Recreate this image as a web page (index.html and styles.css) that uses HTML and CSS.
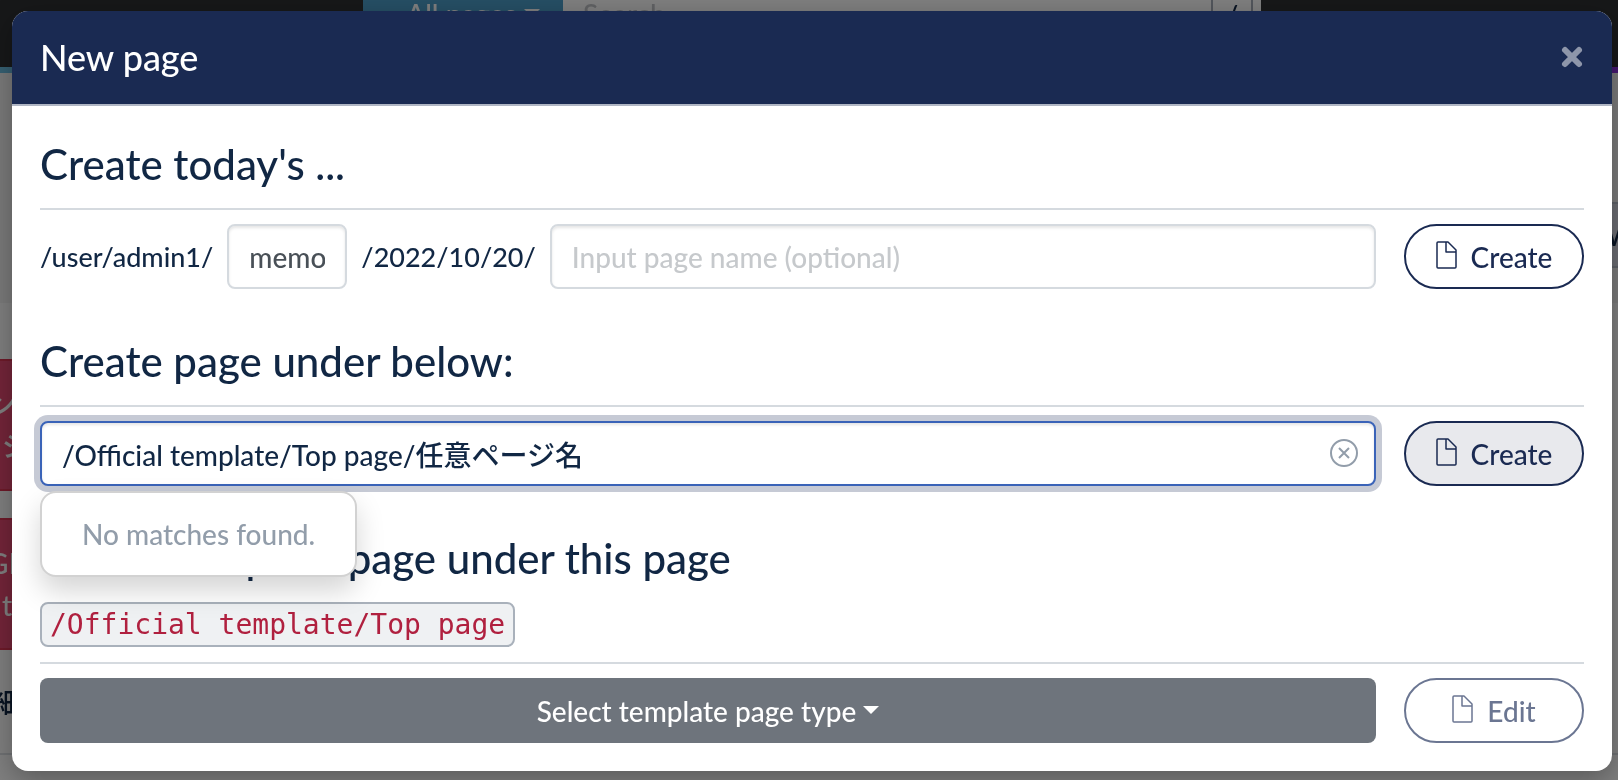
FILE: index.html
```
<!DOCTYPE html>
<html lang="ja">
<head>
    <meta charset="UTF-8">
    <meta name="viewport" content="width=device-width, initial-scale=1.0">
    <title>New page</title>
    <link rel="stylesheet" href="styles.css">
</head>
<body>
    <svg width="0" height="0" class="icon-defs" aria-hidden="true">
        <symbol id="icon-doc" viewBox="0 0 21 28">
            <path d="M12 1H2a1 1 0 0 0-1 1v24a1 1 0 0 0 1 1h17a1 1 0 0 0 1-1V9z M10 1.500V11h9.500" fill="none" stroke="currentColor" stroke-width="1.500" stroke-linejoin="round"/>
        </symbol>
    </svg>

    <div class="page" aria-hidden="true">
        <nav class="navbar">
            <div class="global-search">
                <button type="button" class="search-scope">All pages <span class="caret"></span></button>
                <input type="text" class="search-input" placeholder="Search..." aria-label="Search">
                <span class="search-key">/</span>
            </div>
        </nav>
        <div class="grw-border"></div>
        <div class="subnav">
            <button type="button" class="subnav-btn">W</button>
        </div>
        <div class="content">
            <div class="label-cell">
                <div class="cut">ン</div>
                <div>ジ</div>
            </div>
            <div class="label-cell">
                <div class="cut">GR</div>
                <div>t</div>
            </div>
            <div class="detail">細</div>
        </div>
    </div>

    <div class="backdrop"></div>

    <div class="modal" role="dialog" aria-labelledby="modalTitle">
        <div class="modal-content">
            <div class="modal-header">
                <h1 id="modalTitle">New page</h1>
                <button type="button" class="close" aria-label="Close">
                    <svg width="24" height="24" viewBox="0 0 24 24">
                        <path d="M5 5l14 14M19 5L5 19" stroke="currentColor" stroke-width="6" stroke-linecap="round"/>
                    </svg>
                </button>
            </div>
            <div class="modal-body">
                <section>
                    <h2>Create today's ...</h2>
                    <div class="form-row">
                        <div class="form-fields">
                            <label for="memo">/user/admin1/</label>
                            <input type="text" id="memo" class="form-control memo" value="memo">
                            <label for="pageName">/2022/10/20/</label>
                            <input type="text" id="pageName" class="form-control" placeholder="Input page name (optional)">
                        </div>
                        <button type="button" class="btn-pill"><svg class="icon"><use href="#icon-doc"/></svg>Create</button>
                    </div>
                </section>

                <section>
                    <h2 id="underLabel">Create page under below:</h2>
                    <div class="form-row">
                        <div class="typeahead">
                            <input type="text" class="form-control focused" value="/Official template/Top page/任意ページ名" aria-labelledby="underLabel">
                            <button type="button" class="clear" aria-label="Clear">
                                <svg width="28" height="28" viewBox="0 0 28 28" fill="none" stroke="currentColor" stroke-width="2">
                                    <circle cx="14" cy="14" r="13"/>
                                    <path d="M9 9l10 10M19 9L9 19"/>
                                </svg>
                            </button>
                            <div class="dropdown-menu">No matches found.</div>
                        </div>
                        <button type="button" class="btn-pill active"><svg class="icon"><use href="#icon-doc"/></svg>Create</button>
                    </div>
                </section>

                <section>
                    <h2>Create template page under this page<br><code>/Official template/Top page</code></h2>
                    <div class="form-row">
                        <button type="button" class="btn-secondary">Select template page type <span class="caret"></span></button>
                        <button type="button" class="btn-pill disabled"><svg class="icon"><use href="#icon-doc"/></svg>Edit</button>
                    </div>
                </section>
            </div>
        </div>
    </div>
</body>
</html>
```
FILE: styles.css
```
:root {
    --navy: #1a2a52;
    --text: #112744;
    --border: #d5dadf;
    --muted: #929daa;
}

* {
    box-sizing: border-box;
}

body {
    margin: 0;
    min-height: 100vh;
    overflow: hidden;
    background: #fff;
    color: var(--text);
    font: 500 28px/42px Lato, "Noto Sans CJK JP", sans-serif;
}

button,
input {
    font: inherit;
    color: inherit;
}

button {
    cursor: pointer;
}

label {
    font-size: 27px;
}

.icon-defs {
    position: absolute;
}

/* page behind the modal */
.page {
    position: fixed;
    inset: 0;
    overflow: hidden;
}

.navbar {
    display: flex;
    justify-content: center;
    height: 67px;
    background: #2e3033;
}

.global-search {
    display: flex;
    align-items: flex-start;
    width: 898px;
    height: 44px;
    margin-left: 6px;
    background: #fff;
}

.search-scope {
    width: 200px;
    height: 28px;
    padding: 0 0 0 20px;
    border: 0;
    background: #4c9fca;
    color: #fff;
    line-height: 28px;
}

.search-input {
    flex: 1;
    min-width: 0;
    height: 28px;
    padding: 0 20px;
    border: 0;
    background: transparent;
}

.search-input::placeholder {
    color: #c2c5c9;
}

.search-key {
    width: 42px;
    margin-right: 8px;
    border: 2px solid #a5adb8;
    border-top: 0;
    text-align: center;
    line-height: 30px;
}

.grw-border {
    height: 6px;
    background: linear-gradient(90deg, #6dc0e4, #8a30e0);
}

.subnav {
    display: flex;
    justify-content: flex-end;
    align-items: flex-start;
    height: 230px;
    padding-top: 129px;
    background: #f5f5f5;
}

.subnav-btn {
    width: 40px;
    height: 66px;
    padding: 0 0 0 28px;
    border: solid #bcc2d0;
    border-width: 2px 0;
    background: #d6d9e4;
    overflow: hidden;
}

.content {
    padding-top: 56px;
}

.label-cell {
    width: 200px;
    height: 132px;
    margin-bottom: 27px;
    padding: 22px 0 0 2px;
    border: solid #dc3553;
    border-width: 2px 0;
    background: #e64a72;
    color: #fff;
}

.cut {
    text-indent: -14px;
}

.detail {
    height: 78px;
    border-bottom: 2px solid #dfe2e6;
    line-height: 50px;
    text-indent: -8px;
}

.backdrop {
    position: fixed;
    inset: 0;
    background: rgba(0, 0, 0, 0.5);
}

/* modal */
.modal {
    position: relative;
    padding: 11px 6px 9px 12px;
}

.modal-content {
    border-radius: 16px;
    background: #fff;
    box-shadow: 0 8px 28px rgba(0, 0, 0, 0.3);
}

.modal-header {
    display: flex;
    justify-content: space-between;
    align-items: center;
    padding: 24px 28px 25px;
    border-bottom: 2px solid #b0b6c4;
    border-radius: 16px 16px 0 0;
    background: var(--navy);
    background-clip: padding-box;
    color: #fff;
}

h1 {
    margin: 0;
    font-size: 36px;
    font-weight: 500;
    line-height: 44px;
}

.close {
    display: flex;
    padding: 0;
    border: 0;
    background: none;
    color: #8e96aa;
}

.modal-body {
    padding: 28px;
}

section + section {
    margin-top: 42px;
}

h2 {
    margin: 0 0 14px;
    padding-bottom: 14px;
    border-bottom: 2px solid var(--border);
    font-size: 42px;
    font-weight: 500;
    line-height: 60px;
}

code {
    display: inline-block;
    margin-top: 14px;
    padding: 0 8px;
    border: 2px solid #a9b1bb;
    border-radius: 8px;
    background: #eff1f3;
    color: #b0203f;
    font: 28px/41px "DejaVu Sans Mono", monospace;
    vertical-align: top;
}

.form-row {
    display: flex;
    gap: 28px;
}

.form-fields {
    display: flex;
    flex: 1;
    align-items: center;
    gap: 14px;
}

.form-control {
    flex: 1;
    min-width: 0;
    width: 100%;
    height: 65px;
    padding: 0 20px;
    border: 2px solid var(--border);
    border-radius: 8px;
    background: #fff;
    color: #495057;
    box-shadow: inset 0 2px 3px rgba(0, 0, 0, 0.1);
}

.form-control::placeholder {
    color: #c6c9cc;
}

.memo {
    flex: none;
    width: 120px;
}

.typeahead {
    position: relative;
    flex: 1;
}

.focused {
    display: block;
    border-color: #3a63b8;
    color: var(--text);
    box-shadow: inset 0 2px 3px rgba(0, 0, 0, 0.1), 0 0 0 6px #c6cad5;
    outline: none;
}

.clear {
    position: absolute;
    top: 18px;
    right: 18px;
    display: flex;
    padding: 0;
    border: 0;
    background: none;
    color: var(--muted);
}

.dropdown-menu {
    position: absolute;
    top: 70px;
    left: 0;
    padding: 20px 40px;
    border: 2px solid #d2d2d2;
    border-radius: 16px;
    background: #fff;
    box-shadow: 0 14px 28px rgba(0, 0, 0, 0.17);
    color: var(--muted);
    white-space: nowrap;
}

.btn-pill {
    display: flex;
    justify-content: center;
    align-items: center;
    gap: 14px;
    width: 180px;
    height: 65px;
    padding: 0;
    border: 2px solid var(--navy);
    border-radius: 33px;
    background: #fff;
    color: var(--navy);
}

.btn-pill.active {
    background: #e8e9ed;
}

.btn-pill.disabled {
    border-color: #6b7692;
    color: #6b7692;
}

.icon {
    width: 21px;
    height: 28px;
    margin-bottom: 4px;
}

.btn-secondary {
    flex: 1;
    height: 65px;
    border: 0;
    border-radius: 8px;
    background: #6e747c;
    color: #fff;
}

.caret {
    display: inline-block;
    border-top: 8px solid;
    border-right: 8px solid transparent;
    border-left: 8px solid transparent;
    vertical-align: 8px;
}
```
